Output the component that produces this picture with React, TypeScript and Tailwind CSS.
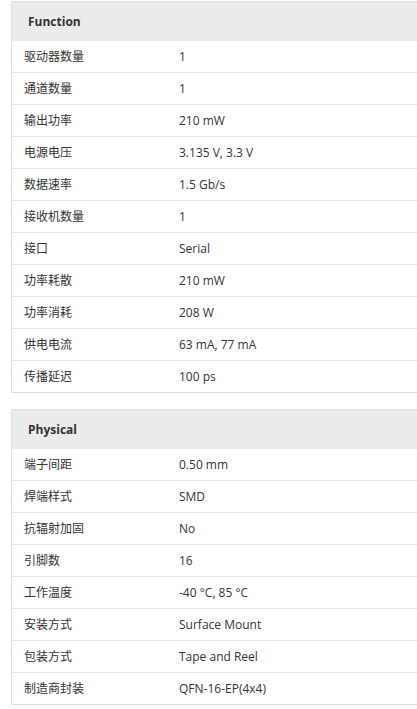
import React from "react";

const fn: [string, string][] = [
  ["驱动器数量", "1"],
  ["通道数量", "1"],
  ["输出功率", "210 mW"],
  ["电源电压", "3.135 V, 3.3 V"],
  ["数据速率", "1.5 Gb/s"],
  ["接收机数量", "1"],
  ["接口", "Serial"],
  ["功率耗散", "210 mW"],
  ["功率消耗", "208 W"],
  ["供电电流", "63 mA, 77 mA"],
  ["传播延迟", "100 ps"],
];

const phys: [string, string][] = [
  ["端子间距", "0.50 mm"],
  ["焊端样式", "SMD"],
  ["抗辐射加固", "No"],
  ["引脚数", "16"],
  ["工作温度", "-40 °C, 85 °C"],
  ["安装方式", "Surface Mount"],
  ["包装方式", "Tape and Reel"],
  ["制造商封装", "QFN-16-EP(4x4)"],
];

function Card({ title, rows }: { title: string; rows: [string, string][] }) {
  return (
    <div className="ml-[11px] w-[420px] border border-[#dedede] bg-white">
      <div className="flex h-[39px] items-center bg-[#ebebeb] pl-[16px] text-[12px] font-bold text-[#333]">
        {title}
      </div>
      {rows.map(([k, v], i) => (
        <div
          key={k}
          className={`flex items-center text-[12px] text-[#333] ${i > 0 ? "h-[32px] border-t border-[#e4e4e4]" : "h-[31px]"}`}
        >
          <div className="w-[167px] pl-[12px]">{k}</div>
          <div>{v}</div>
        </div>
      ))}
    </div>
  );
}

export default function App() {
  return (
    <div
      className="w-[417px] h-[709px] overflow-hidden bg-white pt-[1px]"
      style={{ fontFamily: '"Open Sans", "Noto Sans CJK SC", sans-serif' }}
    >
      <Card title="Function" rows={fn} />
      <div className="h-[16px]" />
      <Card title="Physical" rows={phys} />
    </div>
  );
}
